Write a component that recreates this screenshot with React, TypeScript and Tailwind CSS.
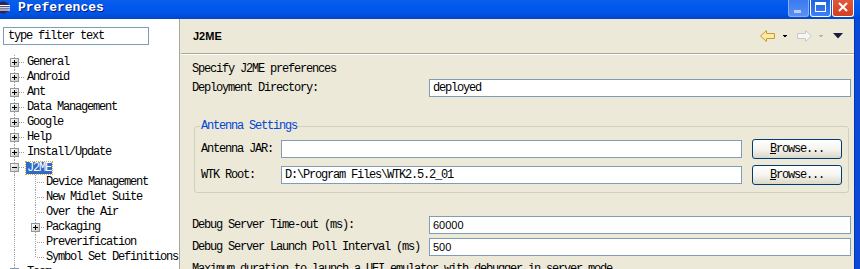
import React from "react";

const mono = "font-['Liberation_Mono',monospace] text-[12px] tracking-[-1.2px]";

type TreeRow = {
  label: string;
  child?: boolean;
  box?: "plus" | "minus";
  last?: boolean;
  selected?: boolean;
};

const rows: TreeRow[] = [
  { label: "General", box: "plus" },
  { label: "Android", box: "plus" },
  { label: "Ant", box: "plus" },
  { label: "Data Management", box: "plus" },
  { label: "Google", box: "plus" },
  { label: "Help", box: "plus" },
  { label: "Install/Update", box: "plus" },
  { label: "J2ME", box: "minus", selected: true },
  { label: "Device Management", child: true },
  { label: "New Midlet Suite", child: true },
  { label: "Over the Air", child: true },
  { label: "Packaging", child: true, box: "plus" },
  { label: "Preverification", child: true },
  { label: "Symbol Set Definitions", child: true, last: true },
  { label: "Team", box: "plus" },
];

function ExpandBox({ x, kind }: { x: number; kind: "plus" | "minus" }) {
  return (
    <g>
      <defs>
        <linearGradient id="boxfill" x1="0" y1="0" x2="1" y2="1">
          <stop offset="0" stopColor="#ffffff" />
          <stop offset="1" stopColor="#c8c4b4" />
        </linearGradient>
      </defs>
      <rect x={x + 0.5} y={3.5} width={8} height={8} fill="url(#boxfill)" stroke="#8c9aa8" />
      <line x1={x + 2} y1={7.5} x2={x + 7} y2={7.5} stroke="#000" />
      {kind === "plus" && <line x1={x + 4.5} y1={5} x2={x + 4.5} y2={10} stroke="#000" />}
    </g>
  );
}

function Gutter({ row }: { row: TreeRow }) {
  const dot = { stroke: "#a0a0a0", strokeDasharray: "1 1" };
  if (!row.child) {
    return (
      <svg width={25} height={15} className="shrink-0" shapeRendering="crispEdges">
        <line x1={14.5} y1={0} x2={14.5} y2={15} {...dot} />
        <line x1={19} y1={7.5} x2={25} y2={7.5} {...dot} />
        {row.box && <ExpandBox x={10} kind={row.box} />}
      </svg>
    );
  }
  return (
    <svg width={46} height={15} className="shrink-0" shapeRendering="crispEdges">
      <line x1={14.5} y1={0} x2={14.5} y2={15} {...dot} />
      <line x1={35.5} y1={0} x2={35.5} y2={row.last ? 8 : 15} {...dot} />
      <line x1={37} y1={7.5} x2={45} y2={7.5} {...dot} />
      {row.box && <ExpandBox x={31} kind={row.box} />}
    </svg>
  );
}

function Tree() {
  return (
    <div className="mt-[10px]">
      {rows.map((r) => (
        <div key={r.label} className="flex h-[15px] items-center">
          <Gutter row={r} />
          {r.selected ? (
            <span
              className={`${mono} leading-[12px] bg-[#316ac5] text-white px-[1px] outline outline-1 outline-dotted outline-[#c8b040] ml-[1px]`}
            >
              {r.label}
            </span>
          ) : (
            <span className={`${mono} leading-[15px] whitespace-nowrap ${r.child ? "" : "pl-[2px]"}`}>
              {r.label}
            </span>
          )}
        </div>
      ))}
    </div>
  );
}

function Field({ value, sans, className }: { value?: string; sans?: boolean; className?: string }) {
  return (
    <div
      className={`h-[18px] border border-[#7f9db9] bg-white flex items-center pl-[3px] overflow-hidden whitespace-nowrap ${
        sans ? "font-['Liberation_Sans',sans-serif] text-[11px]" : mono
      } ${className ?? ""}`}
    >
      {value}
    </div>
  );
}

function BrowseButton() {
  return (
    <button className="ml-[10px] w-[90px] h-[20px] shrink-0 rounded-[3px] border border-[#003c74] bg-gradient-to-b from-[#ffffff] via-[#f5f4ef] to-[#dcd8c8] flex items-center justify-center">
      <span className={mono}>
        <span className="underline">B</span>rowse...
      </span>
    </button>
  );
}

function NavArrows() {
  return (
    <svg width={84} height={12} shapeRendering="crispEdges">
      <polygon
        points="0.5,6 6.5,0.5 6.5,3.5 14.5,3.5 14.5,8.5 6.5,8.5 6.5,11.5"
        fill="#fde8a4"
        stroke="#c89a36"
        shapeRendering="auto"
      />
      <polygon points="22,5 27,5 24.5,7.5" fill="#000" />
      <polygon
        points="51.5,6 45.5,0.5 45.5,3.5 37.5,3.5 37.5,8.5 45.5,8.5 45.5,11.5"
        fill="#f6f6f6"
        stroke="#c8c8c8"
        shapeRendering="auto"
      />
      <polygon points="58,5 63,5 60.5,7.5" fill="#b4b4b4" />
      <polygon points="73,3 83,3 78,8.5" fill="#1c1c40" shapeRendering="auto" />
    </svg>
  );
}

function TitleBar() {
  return (
    <div className="h-[19px] shrink-0 flex items-start bg-[linear-gradient(to_bottom,#0a5ee8,#0058ee_35%,#0054e3_70%,#0145cc)] pr-[6px]">
      <svg width={12} height={15} className="shrink-0 mt-[1px]">
        <circle cx={3} cy={6.5} r={6} fill="#2a2458" />
        <rect x={-4} y={4} width={14} height={1.2} fill="#fff" />
        <rect x={-4} y={6.2} width={14} height={1.2} fill="#fff" />
        <rect x={-4} y={8.4} width={14} height={1.2} fill="#fff" />
      </svg>
      <span className="ml-[6px] font-['Liberation_Mono',monospace] text-[13px] font-bold leading-[15px] text-white [text-shadow:1px_1px_#0a1a80]">
        Preferences
      </span>
      <div className="ml-auto flex gap-[1px]">
        <div className="w-[21px] h-[17px] rounded-b-[3px] border border-t-0 border-[#8fb0f0] bg-gradient-to-b from-[#3a7af0] to-[#5a90f4] flex items-end justify-start pl-[5px] pb-[3px]">
          <div className="w-[7px] h-[3px] bg-[#b8ccf4]" />
        </div>
        <div className="w-[21px] h-[17px] rounded-b-[3px] border border-t-0 border-white bg-gradient-to-b from-[#1e62e6] to-[#3f80f4] flex items-center justify-center">
          <div className="w-[11px] h-[10px] border border-white border-t-[3px] -mt-[2px]" />
        </div>
        <div className="w-[22px] h-[17px] rounded-b-[3px] border border-t-0 border-white bg-gradient-to-b from-[#e0583a] to-[#d2401e] flex items-center justify-center">
          <svg width={10} height={10} className="-mt-[2px]">
            <path d="M1 1 L9 9 M9 1 L1 9" stroke="#fff" strokeWidth={2} />
          </svg>
        </div>
      </div>
    </div>
  );
}

export default function App() {
  return (
    <div className="w-[860px] h-[269px] overflow-hidden flex flex-col bg-[#ece9d8] text-black">
      <TitleBar />
      <div className="flex flex-1 min-h-0">
        <div className="w-[179px] shrink-0 bg-white pt-[8px] overflow-hidden">
          <Field value="type filter text" className="ml-[3px] w-[146px] pl-[4px]" />
          <Tree />
        </div>
        <div className="w-[2px] shrink-0 bg-[#ece9d8] border-l border-[#aca899]" />
        <div className="flex-1 min-w-0 overflow-hidden">
          <div className="h-[35px] flex items-center justify-between pl-[12px] pr-[10px] border-b border-[#aca899]">
            <span className="font-['Liberation_Sans',sans-serif] text-[11px] font-bold">J2ME</span>
            <NavArrows />
          </div>
          <div className="h-px bg-white" />
          <div className="pl-[11px] pr-[3px]">
            <div className={`${mono} pt-[6px] leading-[16px]`}>Specify J2ME preferences</div>
            <div className="mt-[2px] flex items-center h-[18px]">
              <span className={`${mono} w-[237px] shrink-0`}>Deployment Directory:</span>
              <Field value="deployed" className="flex-1" />
            </div>
            <fieldset className="mt-[22px] mx-[2px] border border-[#d0d0bf] rounded-[3px] px-[6px] pb-[7px]">
              <legend className={`${mono} leading-[15px] px-[1px] -ml-[1px] text-[#0046d5]`}>
                Antenna Settings
              </legend>
              <div className="mt-[5px] flex items-center h-[20px]">
                <span className={`${mono} w-[80px] shrink-0`}>Antenna JAR:</span>
                <Field className="flex-1" />
                <BrowseButton />
              </div>
              <div className="mt-[6px] flex items-center h-[20px]">
                <span className={`${mono} w-[80px] shrink-0`}>WTK Root:</span>
                <Field value="D:\Program Files\WTK2.5.2_01" className="flex-1" />
                <BrowseButton />
              </div>
            </fieldset>
            <div className="mt-[23px] flex items-center h-[18px]">
              <span className={`${mono} w-[237px] shrink-0`}>Debug Server Time-out (ms):</span>
              <Field value="60000" sans className="flex-1" />
            </div>
            <div className="mt-[4px] flex items-center h-[18px]">
              <span className={`${mono} w-[237px] shrink-0 whitespace-nowrap`}>
                Debug Server Launch Poll Interval (ms)
              </span>
              <Field value="500" sans className="flex-1" />
            </div>
            <div className={`${mono} mt-[5px] leading-[16px] whitespace-nowrap`}>
              Maximum duration to launch a UEI emulator with debugger in server mode
            </div>
          </div>
        </div>
        <div className="w-[6px] shrink-0 bg-[#0a4ad6] border-l border-[#0036b0]" />
      </div>
    </div>
  );
}
